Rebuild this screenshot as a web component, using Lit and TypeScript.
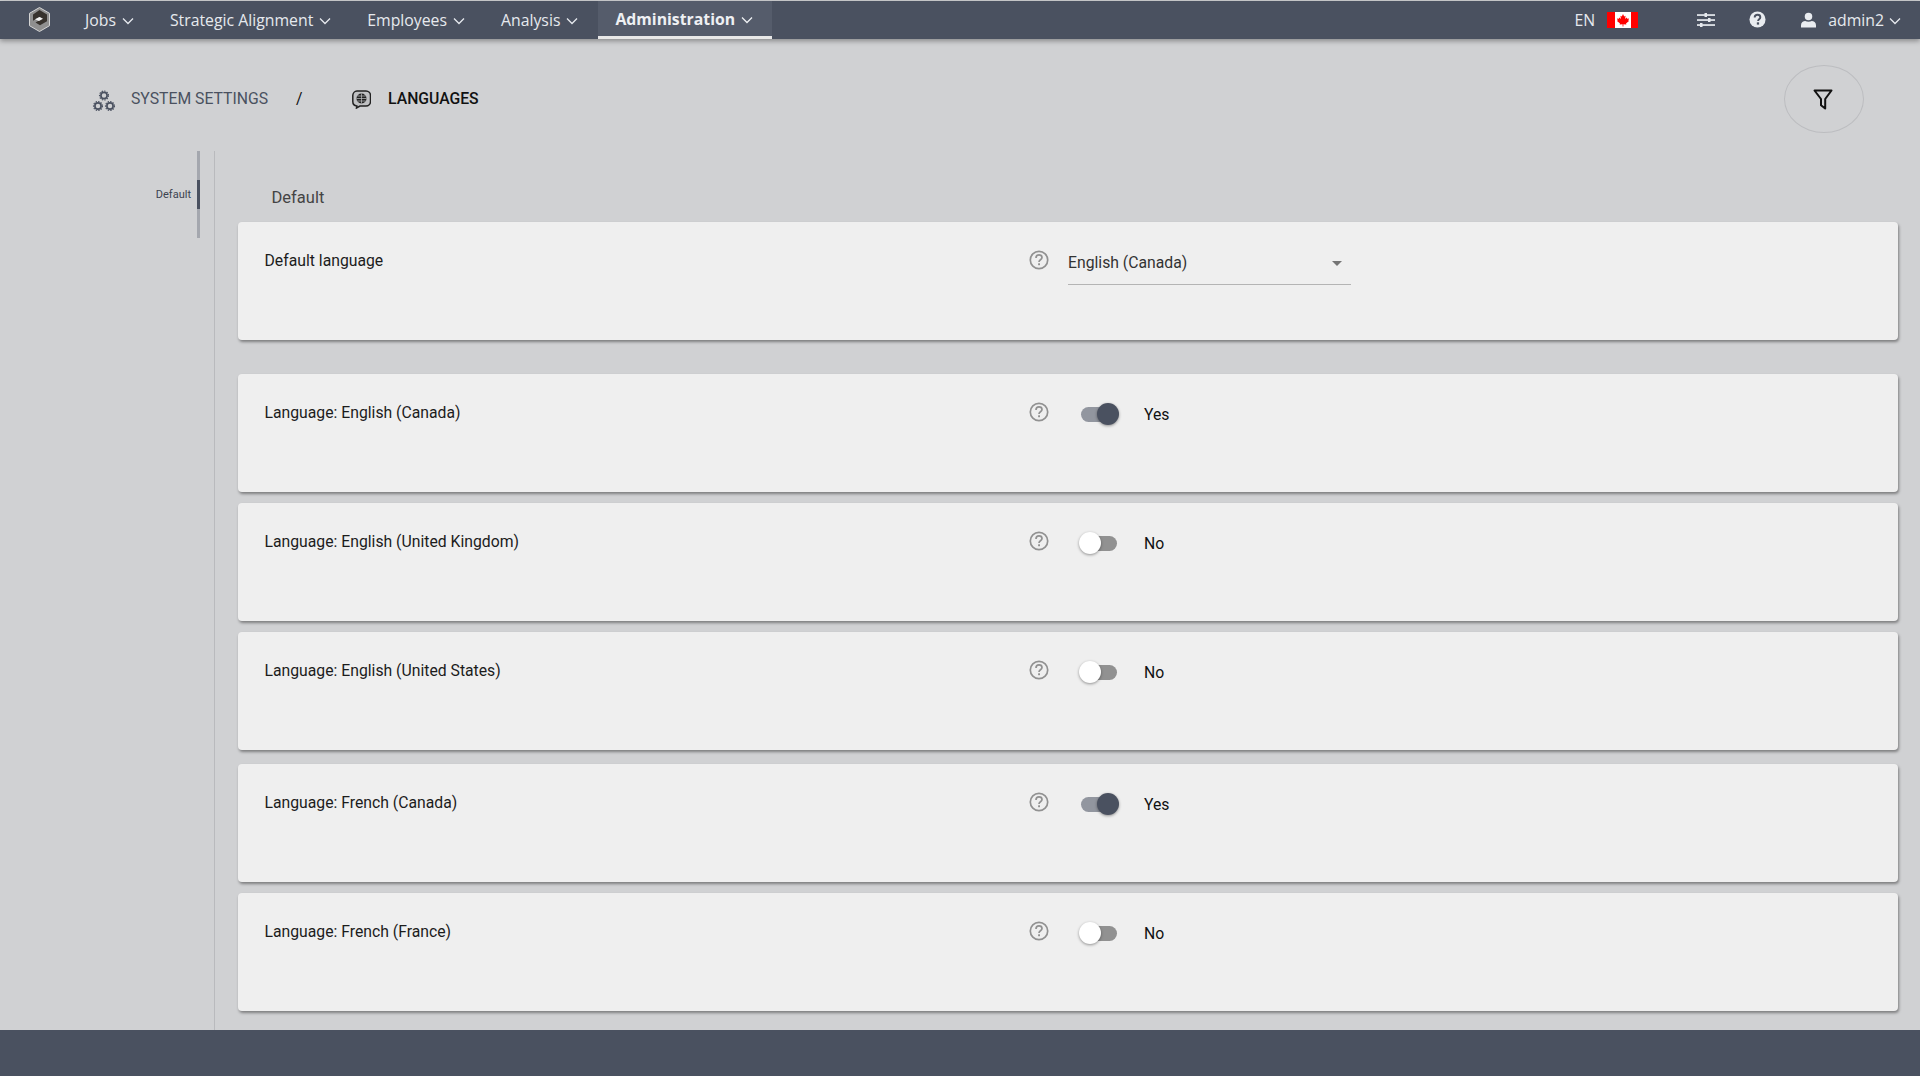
import { LitElement, html, css, svg } from "lit";
import { customElement } from "lit/decorators.js";

const chevron = html`<svg class="chev" viewBox="0 0 12 8" width="12" height="8"><path d="M1 1.500 6 6.500 11 1.500" fill="none" stroke="currentColor" stroke-width="1.300"/></svg>`;

const help = html`<svg class="help" viewBox="0 0 20 20" width="20" height="20"><circle cx="10" cy="10" r="8.700" fill="none" stroke="#919191" stroke-width="1.700"/><path d="M7 7.900c0-1.800 1.300-3 3-3s3 1.200 3 2.500c0 2.300-3 2.300-3 4.500" fill="none" stroke="#919191" stroke-width="1.700"/><rect x="9.100" y="13.300" width="1.900" height="1.900" fill="#919191"/></svg>`;

const gear = (x: number, y: number) => svg`<circle cx="${x}" cy="${y}" r="3.100" fill="none" stroke="#4a5160" stroke-width="1.700"/><circle cx="${x}" cy="${y}" r="4.500" fill="none" stroke="#4a5160" stroke-width="1.100" stroke-dasharray="1.400 1.200"/>`;

const rows = [
  { label: "Language: English (Canada)", on: true, cls: "gap34" },
  { label: "Language: English (United Kingdom)", on: false, cls: "gap11" },
  { label: "Language: English (United States)", on: false, cls: "gap11" },
  { label: "Language: French (Canada)", on: true, cls: "gap14" },
  { label: "Language: French (France)", on: false, cls: "gap11" },
];

const nav = ["Strategic Alignment", "Employees", "Analysis"];

@customElement("app-root")
export class AppRoot extends LitElement {
  static styles = css`
    :host { display: flex; flex-direction: column; height: 1076px; background: #d0d1d3; font-family: Roboto, sans-serif; overflow: hidden; }
    .top { height: 38px; margin-top: 1px; flex: none; background: #4a5160; color: #e6e9ee; display: flex; align-items: stretch; font: 15.800px "Open Sans", sans-serif; box-shadow: 0 2px 5px rgba(0,0,0,.35); position: relative; z-index: 2; }
    .logo { width: 21px; height: 25px; margin: 6px 31px 0 29px; flex: none; }
    .nav { display: flex; align-items: center; gap: 6px; padding: 0 18px; margin-top: -1px; }
    .jobs { padding: 0 18px 0 4px; }
    .active { background: #555c6b; font-weight: 700; color: #eef0f3; border-bottom: 3px solid #e8e8e8; margin: 0 0 0 2px; padding: 1px 19px 0 17px; box-sizing: border-box; }
    .chev { display: block; margin-top: 2px; }
    .right { margin-left: auto; display: flex; align-items: center; padding-right: 19px; margin-top: -1px; }
    .en { margin-right: 12px; }
    .flag { display: block; margin-right: 59px; }
    .sliders { display: block; margin-right: 34px; }
    .q { display: block; margin-right: 35px; }
    .user { display: block; margin-right: 12px; }
    .admin { margin-right: 5px; }

    .crumbs { flex: none; height: 112px; display: flex; align-items: flex-start; padding: 50px 56px 0 92px; box-sizing: border-box; font-size: 15.750px; line-height: 20px; }
    .sys { color: #4a5160; margin-left: 15px; }
    .ico-gears { display: block; }
    .ico-lang { display: block; margin-top: 1px; }
    .slash { color: #111; margin: 0 49px 0 28px; }
    .lang { color: #111; font-weight: 500; margin-left: 17.500px; }
    .filter { margin-left: auto; width: 80px; height: 68px; border: 1px solid #bcbdc0; border-radius: 50%; margin-top: -24px; display: flex; align-items: center; justify-content: center; box-sizing: border-box; padding-right: 3px; }

    .body { flex: 1; display: flex; min-height: 0; }
    .side { width: 215px; flex: none; border-right: 1px solid #b9babd; box-sizing: border-box; }
    .tabbox { margin-left: 16px; width: 184px; height: 87px; border-right: 3px solid #a4a7ae; box-sizing: border-box; display: flex; align-items: center; justify-content: flex-end; position: relative; font-size: 11px; color: #3c4350; padding-right: 6px; }
    .tabbox::after { content: ""; position: absolute; right: -3px; top: 29px; width: 3px; height: 29px; background: #4a5160; }
    .main { flex: 1; padding: 0 22px 0 23px; min-width: 0; }
    .title { height: 71px; box-sizing: border-box; padding: 37px 0 0 33.500px; font-size: 16.500px; line-height: 20px; color: #444; }
    .card { height: 118px; background: #efefef; border-radius: 4px; box-shadow: 1px 2px 3px rgba(0,0,0,.4); display: flex; align-items: flex-start; box-sizing: border-box; padding: 29px 0 0 26.500px; font-size: 15.750px; color: #1c1c1c; line-height: 20px; }
    .gap34 { margin-top: 34px; }
    .gap14 { margin-top: 14px; }
    .gap11 { margin-top: 11px; }
    .label { width: 764px; flex: none; }
    .help { display: block; flex: none; margin-top: -1px; }
    .select { margin-left: 19.500px; width: 283px; height: 32px; margin-top: 2px; border-bottom: 1px solid #b4b4b4; box-sizing: border-box; display: flex; justify-content: space-between; padding-right: 9px; color: #333; }
    .caret { width: 0; height: 0; border: 5.500px solid transparent; border-top: 5.500px solid #757575; margin-top: 8px; }
    .toggle { margin-left: 32.500px; width: 38px; height: 22px; position: relative; flex: none; }
    .track { position: absolute; left: 0; top: 4px; height: 15px; width: 36px; border-radius: 8px; background: #919191; }
    .on .track { background: #92969f; }
    .knob { position: absolute; top: 0; left: -2px; width: 22px; height: 22px; border-radius: 50%; background: #fff; box-shadow: 0 1px 3px rgba(0,0,0,.4); }
    .on .knob { left: 16px; background: #4a5160; }
    .val { margin-left: 25px; margin-top: 2px; color: #111; }
    .foot { flex: none; height: 46px; background: #4a5160; }
  `;

  render() {
    return html`
      <div class="top">
        <svg class="logo" viewBox="0 0 21 25">
          <path d="M10.500 .5 20.500 6.300v12.400L10.500 24.500 .5 18.700V6.300z" fill="#8f8f8f" stroke="#d5d5d5" stroke-width="1"/>
          <path d="M10.500 3 18 7.400v6.800l-7 4-4.500-2.600 7-4-3-1.700-6.500 3.800V7.400z" fill="#37322d"/>
          <path d="M6 12.300 10.500 10l3.500 1.700-4 2.200z" fill="#f2f2f2"/>
        </svg>
        <div class="nav jobs">Jobs ${chevron}</div>
        ${nav.map((n) => html`<div class="nav">${n} ${chevron}</div>`)}
        <div class="nav active">Administration ${chevron}</div>
        <div class="right">
          <span class="en">EN</span>
          <svg class="flag" viewBox="0 0 31 16" width="31" height="16">
            <rect width="31" height="16" fill="#fff"/><rect width="8" height="16" fill="#f00"/><rect x="24" width="7" height="16" fill="#f00"/>
            <path d="M16 2 17.200 4.400 18.600 3.800 18 7 19.600 5.600 20.200 6.800 22 6.500 21.300 8.600 22 9 19 11.400 19.400 12.600 16.400 12.200V14.400H15.600V12.200L12.600 12.600 13 11.400 10 9 10.700 8.600 10 6.500 11.800 6.800 12.400 5.600 14 7 13.400 3.800 14.800 4.400z" fill="#f00"/>
          </svg>
          <svg class="sliders" viewBox="0 0 18 14" width="18" height="14" fill="#e6e9ee">
            <rect y="1.200" width="18" height="1.700"/><rect y="6.200" width="18" height="1.700"/><rect y="11.200" width="18" height="1.700"/>
            <rect x="7.500" y="0" width="2.500" height="4"/><rect x="11" y="5" width="2.500" height="4"/><rect x="3" y="10" width="2.500" height="4"/>
          </svg>
          <svg class="q" viewBox="0 0 18 18" width="17" height="17"><circle cx="9" cy="9" r="8.500" fill="#e9ecf0"/><path d="M6 7c0-2 1.400-3 3.100-3S12 5 12 6.700c0 2-2.400 2.200-2.400 3.900" fill="none" stroke="#4a5160" stroke-width="2"/><rect x="8.300" y="12" width="2.400" height="2.400" fill="#4a5160"/></svg>
          <svg class="user" viewBox="0 0 16 16" width="15" height="16" fill="#e9ecf0"><circle cx="8" cy="4.200" r="4"/><path d="M0 16v-2.500C0 10.500 2.500 9 4.500 9c1 .5 2.200.8 3.500.8S10.500 9.500 11.500 9C13.500 9 16 10.500 16 13.500V16z"/></svg>
          <span class="admin">admin2</span>${chevron}
        </div>
      </div>
      <div class="crumbs">
        <svg class="ico-gears" viewBox="0 0 24 24" width="24" height="24">${gear(12, 6.500)}${gear(6, 17)}${gear(18, 17)}</svg>
        <span class="sys">SYSTEM SETTINGS</span>
        <span class="slash">/</span>
        <svg class="ico-lang" viewBox="0 0 19 19" width="19" height="19">
          <path d="M5 1h9a4.500 4.500 0 0 1 4.500 4.500v6a4.500 4.500 0 0 1-4.500 4.500H8L4.500 18 4.800 16A4.500 4.500 0 0 1 .8 11.500v-6A4.500 4.500 0 0 1 5 1z" fill="#c0c1c3" stroke="#222" stroke-width="1.500"/>
          <circle cx="9.500" cy="8.500" r="5" fill="#222"/>
          <path d="M9.500 3.500v10M4.500 8.500h10M5.300 6h8.400M5.300 11h8.400" stroke="#c0c1c3" stroke-width=".7"/>
        </svg>
        <span class="lang">LANGUAGES</span>
        <div class="filter">
          <svg viewBox="0 0 20 21" width="20" height="21"><path d="M1.500 1.500h17L12.200 10v9.500L8 16.300V10z" fill="none" stroke="#111" stroke-width="2" stroke-linejoin="round"/></svg>
        </div>
      </div>
      <div class="body">
        <div class="side"><div class="tabbox">Default</div></div>
        <div class="main">
          <div class="title">Default</div>
          <div class="card">
            <div class="label">Default language</div>
            ${help}
            <div class="select">English (Canada)<span class="caret"></span></div>
          </div>
          ${rows.map((r) => html`
            <div class="card ${r.cls}">
              <div class="label">${r.label}</div>
              ${help}
              <div class="toggle ${r.on ? "on" : ""}"><div class="track"></div><div class="knob"></div></div>
              <div class="val">${r.on ? "Yes" : "No"}</div>
            </div>`)}
        </div>
      </div>
      <div class="foot"></div>
    `;
  }
}
